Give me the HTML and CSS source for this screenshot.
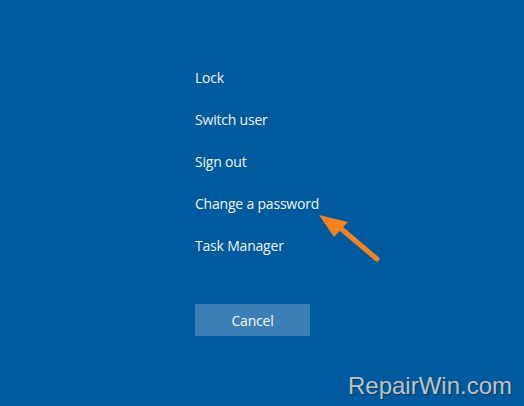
FILE: index.html
```html
<!DOCTYPE html>
<html lang="en">
<head>
  <meta charset="UTF-8">
  <title>Options</title>
  <link rel="stylesheet" href="styles.css">
</head>
<body>
  <div class="screen">
    <ul class="options">
      <li>Lock</li>
      <li>Switch user</li>
      <li>Sign out</li>
      <li class="target">Change a password
        <!-- pointer arrow -->
        <svg class="arrow" width="70" height="56" viewBox="0 0 70 56">
          <path d="M2 2 L31 9 L17 24 Z" fill="#f5821f"/>
          <line x1="22" y1="14" x2="60" y2="46" stroke="#f5821f" stroke-width="5" stroke-linecap="round"/>
        </svg>
      </li>
      <li>Task Manager</li>
    </ul>
    <button class="cancel">Cancel</button>
    <div class="mark">RepairWin.com</div>
  </div>
</body>
</html>
```
FILE: styles.css
```css
body {
  margin: 0;
  background-color: #005a9e;
  font-family: 'Open Sans', 'Noto Sans', sans-serif;
}

.screen {
  position: relative;
  width: 524px;
  height: 406px;
  padding: 66px 0 0 195px;
  box-sizing: border-box;
}

.options {
  list-style: none;
  margin: 0;
  padding: 0;
}

.options li {
  position: relative;
  color: #f0f4f8;
  font-size: 14px;
  letter-spacing: -0.2px;
  height: 42px;
  line-height: 24px;
}

.arrow {
  position: absolute;
  left: 122px;
  top: 21px;
}

.cancel {
  margin-top: 28px;
  width: 115px;
  height: 32px;
  border: none;
  background-color: #3c7fb6;
  color: #f4f7fa;
  font-family: inherit;
  font-size: 14px;
  letter-spacing: -0.2px;
  padding: 0;
}

.mark {
  position: absolute;
  right: 12px;
  bottom: 6px;
  font-family: 'Liberation Sans', Arial, sans-serif;
  font-size: 24px;
  color: #b9c5ce;
  text-shadow: 1px 1px 1px #1d3550;
}
```
